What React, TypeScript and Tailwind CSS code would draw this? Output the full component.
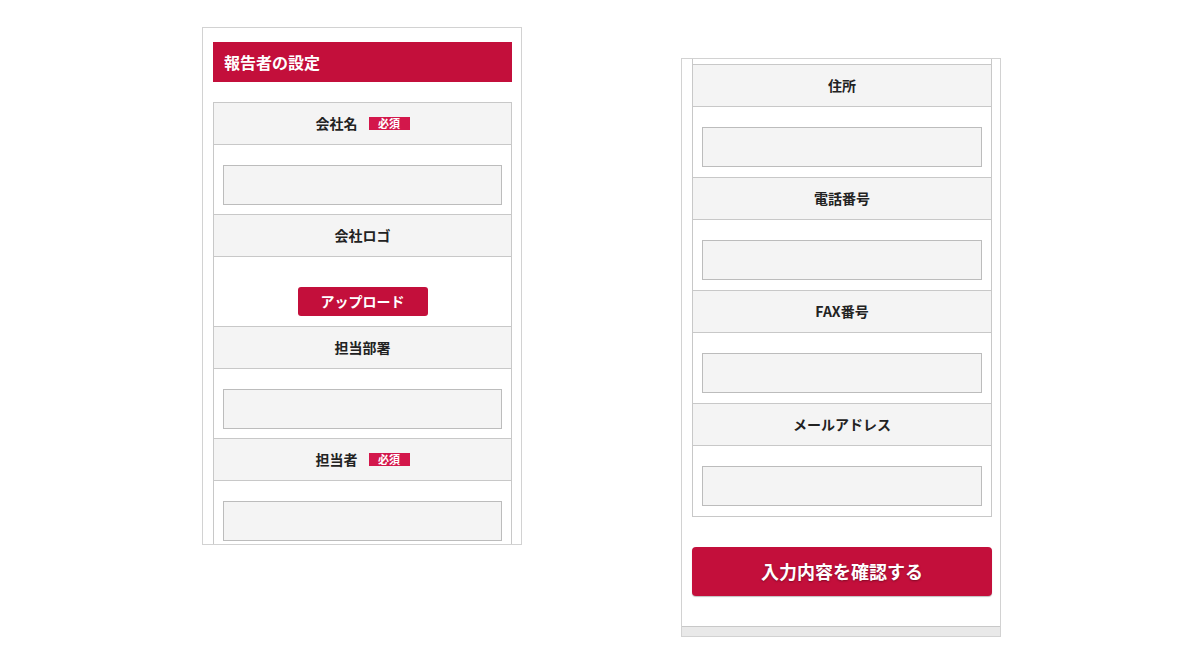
import React from "react";

const FONT = "font-['Noto_Sans_CJK_JP','Noto_Sans',sans-serif]";

interface FieldProps {
  label: string;
  required?: boolean;
  inputPeriod?: "short" | "long";
  children?: React.ReactNode;
}

const RequiredBadge: React.FC = () => (
  <span className="ml-[11px] inline-flex h-[13px] w-[41px] items-center justify-center bg-[#d3174b] text-[11px] leading-none font-bold text-white">
    必須
  </span>
);

const LabelRow: React.FC<{ label: string; required?: boolean }> = ({
  label,
  required
}) => (
  <div className="flex h-[42px] items-center justify-center border-b border-[#c8c8c8] bg-[#f4f4f4] text-[14px] font-bold text-[#222]">
    <span>{label}</span>
    {required && <RequiredBadge />}
  </div>
);

const TextBox: React.FC = () => (
  <div className="h-[40px] w-full border border-[#bcbcbc] bg-[#f4f4f4]" />
);

const Field: React.FC<FieldProps> = ({
  label,
  required,
  inputPeriod = "short",
  children
}) => (
  <>
    <LabelRow label={label} required={required} />
    {/* 入力欄 */}
    <div
      className={
        inputPeriod === "long"
          ? "h-[71px] border-b border-[#c8c8c8] bg-white px-[9px] pt-[20px]"
          : "h-[70px] border-b border-[#c8c8c8] bg-white px-[9px] pt-[20px]"
      }
    >
      {children ?? <TextBox />}
    </div>
  </>
);

const LeftScreen: React.FC = () => (
  <div className="mt-[27px] ml-[202px] flex h-[518px] w-[320px] flex-col overflow-hidden border border-[#d2d2d2] bg-white pr-[9px] pl-[10px]">
    {/* 見出し */}
    <div className="mt-[14px] flex h-[40px] shrink-0 items-center bg-[#c30f3b] pl-[11px] text-[16px] font-bold text-white">
      報告者の設定
    </div>
    <div className="mt-[20px] shrink-0 border-x border-t border-[#c8c8c8]">
      <Field label="会社名" required />
      <Field label="会社ロゴ">
        <div className="flex justify-center pt-[10px]">
          <button className="h-[29px] w-[130px] rounded-[3px] bg-[#c30f3b] text-[14px] font-bold text-white">
            アップロード
          </button>
        </div>
      </Field>
      <Field label="担当部署" />
      <Field label="担当者" required />
    </div>
  </div>
);

const RightScreen: React.FC = () => (
  <div className="mt-[58px] ml-[159px] flex h-[579px] w-[320px] flex-col overflow-hidden border border-[#d2d2d2] bg-white">
    <div className="flex flex-1 flex-col pr-[8px] pl-[10px]">
      <div className="border-x border-[#c8c8c8]">
        {/* 前の入力欄の下端 */}
        <div className="h-[6px] border-b border-[#c8c8c8]" />
        <Field label="住所" inputPeriod="long" />
        <Field label="電話番号" inputPeriod="long" />
        <Field label="FAX番号" inputPeriod="long" />
        <Field label="メールアドレス" inputPeriod="long" />
      </div>
      <button className="mt-[30px] h-[49px] w-full rounded-[4px] bg-[#c30f3b] text-[18px] font-bold text-white shadow-[0_1px_1px_rgba(0,0,0,0.25)] [text-shadow:0_1px_2px_rgba(0,0,0,0.35)]">
        入力内容を確認する
      </button>
    </div>
    <div className="h-[10px] shrink-0 border-t border-[#c8c8c8] bg-[#e9e9e9]" />
  </div>
);

export default function App() {
  return (
    <div className={`flex h-[660px] w-[1200px] items-start bg-white ${FONT}`}>
      <LeftScreen />
      <RightScreen />
    </div>
  );
}
